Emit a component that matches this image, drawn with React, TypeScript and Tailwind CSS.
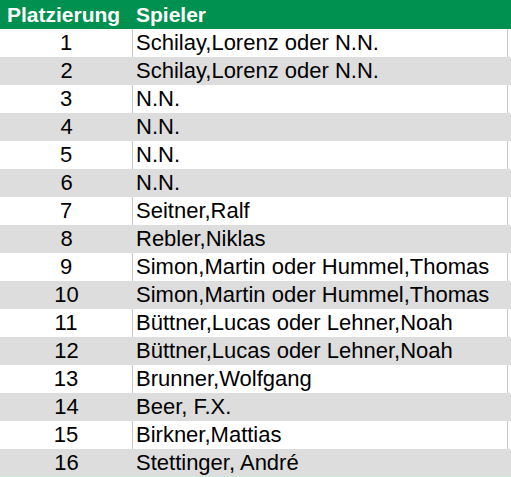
const rows: string[] = [
  'Schilay,Lorenz oder N.N.',
  'Schilay,Lorenz oder N.N.',
  'N.N.',
  'N.N.',
  'N.N.',
  'N.N.',
  'Seitner,Ralf',
  'Rebler,Niklas',
  'Simon,Martin oder Hummel,Thomas',
  'Simon,Martin oder Hummel,Thomas',
  'Büttner,Lucas oder Lehner,Noah',
  'Büttner,Lucas oder Lehner,Noah',
  'Brunner,Wolfgang',
  'Beer, F.X.',
  'Birkner,Mattias',
  'Stettinger, André',
];

export default function App() {
  return (
    <div className="w-[511px] h-[477px] bg-white font-['Liberation_Sans',Arial,sans-serif] text-[22px] leading-none text-black overflow-hidden">
      <div className="flex h-[29px] bg-[#00904f] text-white font-bold text-[21px] items-center">
        <div className="w-[133px] pl-[7px]">Platzierung</div>
        <div className="flex-1 pl-[3px]">Spieler</div>
      </div>
      {rows.map((name, i) => {
        const even = i % 2 === 1;
        const last = i === rows.length - 1;
        return (
          <div
            key={i}
            className={`flex items-center ${even ? 'bg-[#dddddd]' : 'bg-white'} ${last ? 'h-[28px] border-b border-[#c6eedb]' : 'h-[28px]'}`}
          >
            <div className={`w-[133px] h-full flex items-center justify-center ${even ? '' : 'border-r border-[#c8c8c8]'}`}>
              {i + 1}
            </div>
            <div className={`w-[375px] h-full flex items-center pl-[3px] ${even ? '' : 'border-r border-[#c8c8c8]'}`}>
              {name}
            </div>
          </div>
        );
      })}
    </div>
  );
}
